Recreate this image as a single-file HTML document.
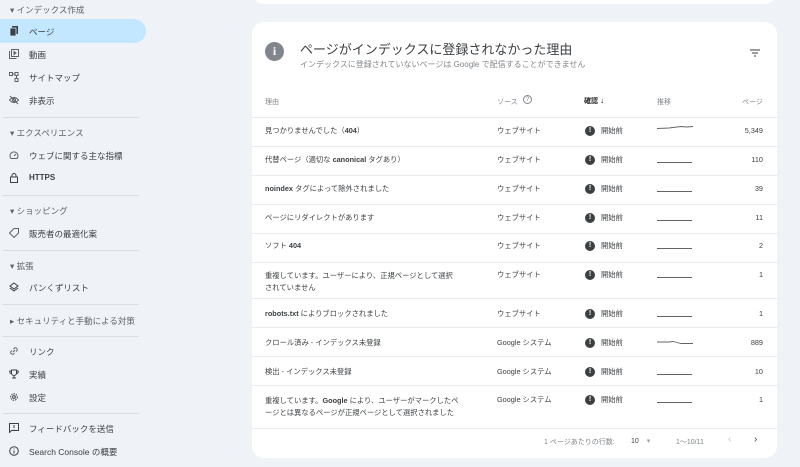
<!DOCTYPE html>
<html><head><meta charset="utf-8"><style>
*{margin:0;padding:0;box-sizing:border-box}
body{width:800px;height:467px;overflow:hidden;background:#eff2f7;font-family:"Liberation Sans","Noto Sans CJK JP",sans-serif;color:#3c4043;position:relative}
.a{position:absolute;white-space:nowrap}
.sh{font-size:8.5px;color:#5f6368;left:10px}
.it{font-size:8.5px;color:#3c4043;left:29px}
.ic{position:absolute;left:9px;width:10px;height:10px}
.dv{position:absolute;left:3px;width:136px;height:1px;background:#dadce0}
.card{position:absolute;background:#fff;border-radius:12px}
.row{position:absolute;left:252px;width:525px;border-top:1px solid #e8eaed}
.t{font-size:7.3px;color:#3c4043}
.bang{position:absolute;width:10px;height:10px;border-radius:50%;background:#3c4043;color:#fff;font-size:7px;font-weight:bold;text-align:center;line-height:10px}
.sp{position:absolute;left:657px;width:35px;height:1px;background:#5f6368}
</style></head><body>
<!-- sidebar -->
<div class="a sh" style="top:4px">▾ インデックス作成</div>
<div class="a" style="left:0;top:19px;width:146px;height:24px;background:#c2e7ff;border-radius:0 12px 12px 0"></div>
<svg class="ic" style="top:26px" viewBox="0 0 10 10"><rect x="3" y="0" width="6" height="8" fill="#3c4043"/><rect x="1" y="2" width="6" height="8" fill="#3c4043" stroke="#c2e7ff" stroke-width=".8"/></svg>
<div class="a it" style="top:26px">ページ</div>
<svg class="ic" style="top:49px" viewBox="0 0 10 10" fill="none" stroke="#5f6368"><rect x="2.5" y=".5" width="7" height="7"/><path d="M.5 2v7.5h7"/><path d="M5 2.5v3l2-1.5z" fill="#5f6368"/></svg>
<div class="a it" style="top:49px">動画</div>
<svg class="ic" style="top:72px" viewBox="0 0 10 10" fill="none" stroke="#5f6368"><rect x=".5" y=".5" width="3" height="3"/><rect x="6" y=".5" width="3" height="3"/><rect x="6" y="6.5" width="3" height="3"/><path d="M3.5 2h2.5M7.5 3.5v3"/></svg>
<div class="a it" style="top:72px">サイトマップ</div>
<svg class="ic" style="top:95px" viewBox="0 0 10 10" fill="none" stroke="#5f6368"><path d="M.5 5q4.5-5 9 0q-4.5 5-9 0z"/><circle cx="5" cy="5" r="1.5"/><path d="M1 1l8 8"/></svg>
<div class="a it" style="top:95px">非表示</div>
<div class="dv" style="top:117px"></div>
<div class="a sh" style="top:127px">▾ エクスペリエンス</div>
<svg class="ic" style="top:150px" viewBox="0 0 10 10" fill="none" stroke="#5f6368"><path d="M2 8.5a4 4 0 1 1 6 0z"/><path d="M5 6l2-2"/></svg>
<div class="a it" style="top:150px">ウェブに関する主な指標</div>
<svg class="ic" style="top:173px" viewBox="0 0 10 10" fill="none" stroke="#3c4043"><rect x="1.5" y="4" width="7" height="5.5"/><path d="M3 4V2.5a2 2 0 0 1 4 0V4"/></svg>
<div class="a it" style="top:173px;font-weight:bold;font-size:8px">HTTPS</div>
<div class="dv" style="top:195px"></div>
<div class="a sh" style="top:205px">▾ ショッピング</div>
<svg class="ic" style="top:228px" viewBox="0 0 10 10" fill="none" stroke="#5f6368"><path d="M5 .5h4.5V5L5 9.5.5 5z"/></svg>
<div class="a it" style="top:228px">販売者の最適化案</div>
<div class="dv" style="top:250px"></div>
<div class="a sh" style="top:260px">▾ 拡張</div>
<svg class="ic" style="top:282px" viewBox="0 0 10 10" fill="none" stroke="#3c4043"><path d="M5 1l4 3-4 3-4-3z"/><path d="M1 6l4 3 4-3"/></svg>
<div class="a it" style="top:282px">パンくずリスト</div>
<div class="dv" style="top:304px"></div>
<div class="a sh" style="top:315px">▸ セキュリティと手動による対策</div>
<div class="dv" style="top:336px"></div>
<svg class="ic" style="top:346px" viewBox="0 0 10 10" fill="none" stroke="#5f6368"><path d="M4 6L6 4M3 4.5L1.8 5.7a2 2 0 0 0 2.5 2.5L5.5 7M7 5.5l1.2-1.2a2 2 0 0 0-2.5-2.5L4.5 3"/></svg>
<div class="a it" style="top:346px">リンク</div>
<svg class="ic" style="top:369px" viewBox="0 0 10 10" fill="none" stroke="#3c4043"><path d="M2.5 1h5v3a2.5 2.5 0 0 1-5 0zM2.5 2H.8v1a1.7 1.7 0 0 0 1.7 1.7M7.5 2h1.7v1a1.7 1.7 0 0 1-1.7 1.7M5 6.5v2M3 9h4"/></svg>
<div class="a it" style="top:369px">実績</div>
<svg class="ic" style="top:392px" viewBox="0 0 10 10" fill="none" stroke="#3c4043"><circle cx="5" cy="5" r="3.3" stroke-dasharray="1.5 1"/><circle cx="5" cy="5" r="1.4"/></svg>
<div class="a it" style="top:392px">設定</div>
<div class="dv" style="top:413px"></div>
<svg class="ic" style="top:423px" viewBox="0 0 10 10" fill="none" stroke="#3c4043"><path d="M.5 .5h9v7H2.5l-2 2z"/><path d="M5 2v3M5 6v.5"/></svg>
<div class="a it" style="top:423px">フィードバックを送信</div>
<svg class="ic" style="top:446px" viewBox="0 0 10 10" fill="none" stroke="#3c4043"><circle cx="5" cy="5" r="4.3"/><path d="M5 4.5v3M5 2.5v.8"/></svg>
<div class="a it" style="top:446px">Search Console の概要</div>

<!-- cards -->
<div class="card" style="left:252px;top:-20px;width:525px;height:24px"></div>
<div class="card" style="left:252px;top:22px;width:525px;height:436px"></div>
<div class="a" style="left:265px;top:42px;width:19px;height:19px;border-radius:50%;background:#80868b;color:#fff;font-size:12px;font-weight:bold;text-align:center;line-height:19px;font-family:'Liberation Serif',serif">i</div>
<div class="a" style="left:300px;top:39px;font-size:13px;color:#3c4043">ページがインデックスに登録されなかった理由</div>
<div class="a" style="left:300px;top:59px;font-size:8px;color:#80868b">インデックスに登録されていないページは Google で配信することができません</div>
<svg class="a" style="left:749px;top:48px" width="12" height="10" viewBox="0 0 12 10" stroke="#5f6368" stroke-width="1.2"><path d="M1 2h10M3 5h6M5 8h2"/></svg>
<div class="a" style="left:265px;top:97px;font-size:7px;color:#80868b">理由</div>
<div class="a" style="left:497px;top:97px;font-size:7px;color:#80868b">ソース</div>
<div class="a" style="left:523px;top:95px;width:9px;height:9px;border:1px solid #80868b;border-radius:50%;font-size:6px;color:#80868b;text-align:center;line-height:8px">?</div>
<div class="a" style="left:584px;top:96px;font-size:7px;color:#202124;font-weight:bold">確認 <span style="font-size:8px">↓</span></div>
<div class="a" style="left:657px;top:97px;font-size:7px;color:#80868b">推移</div>
<div class="a" style="left:742px;top:97px;font-size:7px;color:#80868b">ページ</div>

<div class="row" style="top:117px"></div><div class="row" style="top:146px"></div><div class="row" style="top:175px"></div><div class="row" style="top:204px"></div><div class="row" style="top:233px"></div><div class="row" style="top:262px"></div><div class="row" style="top:298px"></div><div class="row" style="top:327px"></div><div class="row" style="top:356px"></div><div class="row" style="top:385px"></div><div class="row" style="top:428px"></div>

<div class="a t" style="left:265px;top:126px">見つかりませんでした（<b>404</b>）</div>
<div class="a t" style="left:265px;top:155px">代替ページ（適切な <b>canonical</b> タグあり）</div>
<div class="a t" style="left:265px;top:184px"><b>noindex</b> タグによって除外されました</div>
<div class="a t" style="left:265px;top:213px">ページにリダイレクトがあります</div>
<div class="a t" style="left:265px;top:241px">ソフト <b>404</b></div>
<div class="a t" style="left:265px;top:270px;line-height:12px">重複しています。ユーザーにより、正規ページとして選択<br>されていません</div>
<div class="a t" style="left:265px;top:309px"><b>robots.txt</b> によりブロックされました</div>
<div class="a t" style="left:265px;top:338px">クロール済み - インデックス未登録</div>
<div class="a t" style="left:265px;top:367px">検出 - インデックス未登録</div>
<div class="a t" style="left:265px;top:395px;line-height:12px">重複しています。<b>Google</b> により、ユーザーがマークしたペ<br>ージとは異なるページが正規ページとして選択されました</div>

<div class="a t" style="left:497px;top:126px">ウェブサイト</div>
<div class="a t" style="left:497px;top:155px">ウェブサイト</div>
<div class="a t" style="left:497px;top:184px">ウェブサイト</div>
<div class="a t" style="left:497px;top:213px">ウェブサイト</div>
<div class="a t" style="left:497px;top:241px">ウェブサイト</div>
<div class="a t" style="left:497px;top:270px">ウェブサイト</div>
<div class="a t" style="left:497px;top:309px">ウェブサイト</div>
<div class="a t" style="left:497px;top:338px">Google システム</div>
<div class="a t" style="left:497px;top:367px">Google システム</div>
<div class="a t" style="left:497px;top:395px">Google システム</div>

<div class="bang" style="left:585px;top:126px">!</div><div class="a t" style="left:601px;top:126px">開始前</div>
<div class="bang" style="left:585px;top:155px">!</div><div class="a t" style="left:601px;top:155px">開始前</div>
<div class="bang" style="left:585px;top:184px">!</div><div class="a t" style="left:601px;top:184px">開始前</div>
<div class="bang" style="left:585px;top:213px">!</div><div class="a t" style="left:601px;top:213px">開始前</div>
<div class="bang" style="left:585px;top:241px">!</div><div class="a t" style="left:601px;top:241px">開始前</div>
<div class="bang" style="left:585px;top:270px">!</div><div class="a t" style="left:601px;top:270px">開始前</div>
<div class="bang" style="left:585px;top:309px">!</div><div class="a t" style="left:601px;top:309px">開始前</div>
<div class="bang" style="left:585px;top:338px">!</div><div class="a t" style="left:601px;top:338px">開始前</div>
<div class="bang" style="left:585px;top:367px">!</div><div class="a t" style="left:601px;top:367px">開始前</div>
<div class="bang" style="left:585px;top:395px">!</div><div class="a t" style="left:601px;top:395px">開始前</div>

<svg class="a" style="left:657px;top:124px" width="36" height="6"><path d="M0 4.5L12 4L16 3.5L20 3L24 2.5L30 3L36 2.5" stroke="#5f6368" fill="none" stroke-width=".9"/></svg>
<div class="sp" style="top:162px"></div><div class="sp" style="top:191px"></div><div class="sp" style="top:220px"></div><div class="sp" style="top:248px"></div><div class="sp" style="top:277px"></div><div class="sp" style="top:316px"></div>
<svg class="a" style="left:657px;top:340px" width="36" height="6"><path d="M0 2L12 2L16 1.5L20 2.5L24 3.5L36 3.5" stroke="#5f6368" fill="none" stroke-width=".9"/></svg>
<div class="sp" style="top:374px"></div><div class="sp" style="top:402px"></div>

<div class="a t" style="right:37px;top:126px">5,349</div>
<div class="a t" style="right:37px;top:155px">110</div>
<div class="a t" style="right:37px;top:184px">39</div>
<div class="a t" style="right:37px;top:213px">11</div>
<div class="a t" style="right:37px;top:241px">2</div>
<div class="a t" style="right:37px;top:270px">1</div>
<div class="a t" style="right:37px;top:309px">1</div>
<div class="a t" style="right:37px;top:338px">889</div>
<div class="a t" style="right:37px;top:367px">10</div>
<div class="a t" style="right:37px;top:395px">1</div>

<div class="a" style="left:544px;top:437px;font-size:7px;color:#80868b">1 ページあたりの行数:</div>
<div class="a" style="left:631px;top:437px;font-size:7px;color:#3c4043">10 <span style="color:#9aa0a6;margin-left:6px">▾</span></div>
<div class="a" style="left:676px;top:437px;font-size:7px;color:#80868b">1〜10/11</div>
<div class="a" style="left:728px;top:434px;font-size:10px;color:#bdc1c6">‹</div>
<div class="a" style="left:754px;top:434px;font-size:10px;color:#3c4043">›</div>
</body></html>
